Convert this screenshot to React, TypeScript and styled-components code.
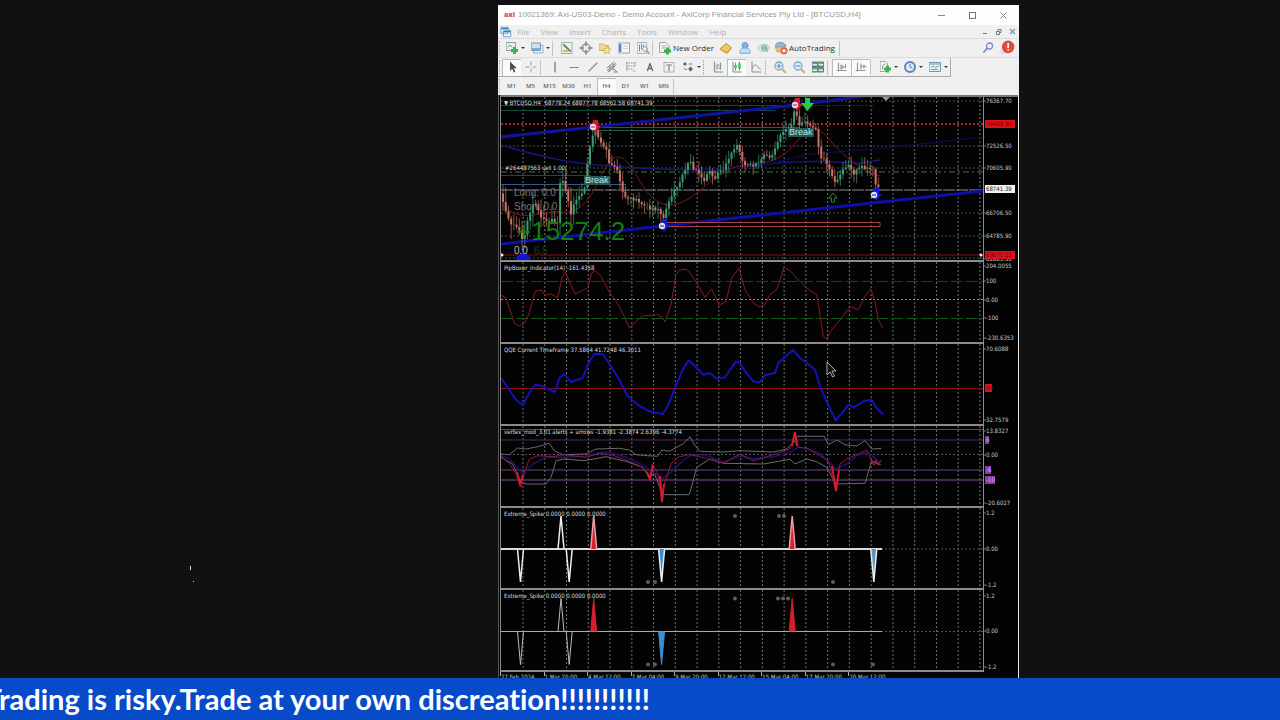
import React from "react";
import styled, { createGlobalStyle } from "styled-components";

const GlobalStyle = createGlobalStyle`
  * { box-sizing: border-box; }
  body { margin: 0; background: #111; font-family: "Open Sans", "Noto Sans", sans-serif; }
  button { font: inherit; color: inherit; background: none; border: 0; padding: 0; margin: 0; }
`;

/* ---------- page ---------- */

const Page = styled.div`
  display: flex;
  flex-direction: column;
  height: 100vh;
  overflow: hidden;
`;

const Stage = styled.main`
  position: relative;
  flex: 1;
  min-height: 0;
  overflow: hidden;
  display: grid;
  grid-template-columns: 498fr 521fr 261fr;
  padding-top: 5px;
`;

const Speck = styled.i<{ $x: string; $y: string; $h: number }>`
  position: absolute;
  left: ${(p) => p.$x};
  top: ${(p) => p.$y};
  width: 1px;
  height: ${(p) => p.$h}px;
  background: #ddd;
`;

const Terminal = styled.section`
  grid-column: 2;
  min-width: 0;
  overflow: hidden;
  background: #f0f0f0;
`;

const Ticker = styled.footer`
  flex: none;
  height: 42px;
  background: #084bc9;
  display: grid;
  grid-template-columns: 650fr 630fr;
  overflow: hidden;
`;

const TickerText = styled.p`
  margin: 0;
  min-width: 0;
  display: flex;
  justify-content: flex-end;
  align-items: center;
  white-space: nowrap;
  color: #fff;
  font: 700 29px/42px Lato, sans-serif;
  font-variant-ligatures: none;
`;

/* ---------- window chrome ---------- */

const TitleBar = styled.header`
  display: flex;
  align-items: center;
  height: 20px;
  padding-left: 6px;
  background: #fefefe;
`;

const Logo = styled.span`
  width: 14px;
  color: #e2455a;
  font: 800 7px/20px "Open Sans", sans-serif;
`;

const Title = styled.h1`
  flex: 1;
  margin: 0;
  color: #9a9a9a;
  font: 400 8px/20px "Liberation Sans", sans-serif;
  white-space: nowrap;
  overflow: hidden;
`;

const WindowButton = styled.button<{ $w: number }>`
  width: ${(p) => p.$w}px;
  height: 14px;
  display: flex;
  align-items: center;
  justify-content: center;
`;

const MenuBar = styled.nav`
  display: flex;
  align-items: center;
  height: 14px;
  padding: 0 0 0 2px;
  gap: 11px;
  color: #b0b0b0;
  font-size: 8px;
  line-height: 13px;
  border-bottom: 1px solid #dcdcdc;
`;

const MenuIcon = styled.span`
  display: flex;
  width: 12px;
  margin-right: -6px;
`;

const Spacer = styled.span`
  flex: 1;
`;

const MdiButtons = styled.span`
  display: flex;
`;

const Toolbar = styled.div<{ $framed?: boolean }>`
  display: flex;
  align-items: center;
  width: ${(p) => (p.$framed ? "fit-content" : "100%")};
  height: 19px;
  padding: 0 ${(p) => (p.$framed ? 0 : 3)}px 0 1px;
  color: #2c2c2c;
  border-bottom: 1px solid ${(p) => (p.$framed ? "#aaa" : "#dedede")};
  border-right: ${(p) => (p.$framed ? "1px solid #aaa" : "0")};
`;

const Grip = styled.span`
  flex: none;
  width: 3px;
  height: 14px;
  border-left: 1px dotted #aaa;
`;

const Divider = styled.span<{ $dotted?: boolean }>`
  flex: none;
  width: 5px;
  height: 15px;
  border-left: 1px ${(p) => (p.$dotted ? "dotted #999" : "solid #c4c4c4")};
`;

const Tool = styled.button<{ $on?: boolean }>`
  flex: none;
  min-width: 19px;
  height: 17px;
  display: flex;
  align-items: center;
  justify-content: center;
  background: ${(p) => (p.$on ? "#fafafa" : "transparent")};
  box-shadow: ${(p) => (p.$on ? "inset 1px 1px 0 #bbb" : "none")};
  svg { display: block; flex: none; opacity: 0.8; }
`;

const TextTool = styled(Tool)<{ $w: number }>`
  width: ${(p) => p.$w}px;
  justify-content: flex-start;
  gap: 1px;
  padding-left: 1px;
  font-size: 8px;
  line-height: 12px;
  white-space: nowrap;
`;

const Drop = styled.button`
  flex: none;
  width: 6px;
  height: 15px;
  display: flex;
  align-items: center;
  &::after {
    content: "";
    border: 2px solid transparent;
    border-top-color: #333;
    border-bottom: 0;
  }
`;

const Period = styled(Tool)`
  color: #666;
  font-size: 6px;
  font-weight: 600;
  line-height: 16px;
`;

/* ---------- charts ---------- */

const Charts = styled.div`
  background: #030303;
  border-left: 1px solid #555;
  border-right: 1px solid #e8e8e8;
  padding: 0 0 20px 1px;
  margin-top: -1px;
`;

const ChartTop = styled.div`
  height: 2px;
  background: #77797a;
`;

const Panel = styled.section<{ $h: number }>`
  display: grid;
  grid-template-columns: minmax(0, 1fr) 34px;
  height: ${(p) => p.$h}px;
`;

const Plot = styled.div`
  position: relative;
  overflow: hidden;
  border: solid #8d8a8a;
  border-width: 0 1px 2px 1px;
  svg { display: block; width: 100%; height: 100%; }
`;

const PanelTitle = styled.h2`
  position: absolute;
  left: 3px;
  top: 2px;
  margin: 0;
  color: #dcdcdc;
  font: 400 6px/8px "DejaVu Sans Condensed", "DejaVu Sans", sans-serif;
  white-space: nowrap;
`;

const Scale = styled.svg`
  display: block;
  width: 34px;
  height: 100%;
  overflow: hidden;
  text { font: 6px "DejaVu Sans Condensed", "DejaVu Sans", sans-serif; fill: #c8c8c8; }
`;

const Note = styled.span<{ $x: number; $y: number; $size: number; $color: string }>`
  position: absolute;
  left: ${(p) => p.$x}px;
  top: ${(p) => p.$y}px;
  color: ${(p) => p.$color};
  font: 400 ${(p) => p.$size}px/1 "Liberation Sans", sans-serif;
  white-space: nowrap;
`;

const OrderNote = styled(Note)`
  font-family: "DejaVu Sans Condensed", "DejaVu Sans", sans-serif;
`;

const BreakTag = styled(Note)`
  padding: 0 1px;
  background: #1d5c58;
`;

const Timeline = styled.ol`
  display: grid;
  grid-template-columns: repeat(11, 9%);
  margin: 0 34px 0 0;
  padding: 0;
  list-style: none;
  color: #ccc;
  font: 400 6px/10px "DejaVu Sans Condensed", "DejaVu Sans", sans-serif;
`;

const TimeMark = styled.li`
  border-left: 1px solid #aaa;
  height: 4px;
  white-space: nowrap;
`;

/* ---------- toolbar drawings ---------- */

const Ico = ({ children, s = 14 }: { children: React.ReactNode; s?: number }) => (
  <svg width={s} height={s} viewBox="0 0 14 14" fill="none" strokeLinecap="round" strokeLinejoin="round" aria-hidden="true">
    {children}
  </svg>
);
const Plus = ({ x = 9.5, y = 9.5 }) => (
  <path d={`M${x - 3.5} ${y}h7M${x} ${y - 3.5}v7`} stroke="#12a02a" strokeWidth="3" strokeLinecap="butt" />
);

const icons: Record<string, React.ReactNode> = {
  newChart: <><rect x="1.5" y="1.5" width="9" height="8" fill="#e4f1e8" stroke="#648d86" /><path d="M3 6l2-2 2 2" stroke="#4c8b62" /><Plus /></>,
  profiles: <><rect x="4" y="4.5" width="9" height="7.5" fill="#e6edf4" stroke="#8ba1b5" /><rect x="1.5" y="2" width="9" height="7.5" fill="#c3dff4" stroke="#5788b0" /><path d="M2 8h8" stroke="#5788b0" strokeWidth="1.5" /></>,
  market: <><rect x="2" y="1.5" width="10" height="11" fill="#f1f6da" stroke="#8aa0a8" /><path d="M4 4l6 6" stroke="#288053" strokeWidth="2" /><path d="M4 10h3" stroke="#e5a431" strokeWidth="2" /></>,
  target: <><circle cx="7" cy="7" r="4" stroke="#686868" strokeWidth="1.2" /><path d="M7 1v3.500M7 9.500v3.500M1 7h3.500M9.500 7h3.500" stroke="#686868" strokeWidth="1.6" /></>,
  navigator: <><path d="M1.500 3h4l1 1.500h4v5h-9z" fill="#f3d66c" stroke="#c3a144" /><path d="M9 5l1.200 2.600 2.800.3-2 2 .5 2.800L9 11.300l-2.500 1.400.5-2.800-2-2 2.800-.3z" fill="#ffe068" stroke="#c69a2a" strokeWidth=".7" /></>,
  terminal: <><rect x="1.500" y="2" width="11" height="10" fill="#f6fafe" stroke="#6f94bb" /><path d="M3.200 3v8" stroke="#2f68ad" strokeWidth="2.400" strokeLinecap="butt" /><path d="M6.500 5h4M6.500 7.500h4" stroke="#b9cadb" /></>,
  tester: <><rect x="1.500" y="1.500" width="9" height="11" fill="#edf3f7" stroke="#91a5b6" /><path d="M3.500 4v6M5.500 3v5M7.500 4v4" stroke="#55758f" /><circle cx="9" cy="8" r="2.300" fill="#fff" stroke="#6e8aa5" /><path d="M11 10l2 2.500" stroke="#6e8aa5" strokeWidth="1.500" /></>,
  order: <><path d="M2 1.500h6l3 3v7H2z" fill="#f5f8f5" stroke="#81948a" /><path d="M4 5h4M4 7h3" stroke="#7aa08b" /><Plus y={10} /></>,
  gold: <><path d="M1.500 7.500L7 2.500l5.500 4L8 11.500z" fill="#efbe42" stroke="#a87518" /><path d="M1.500 7.500v1.800L8 13v-1.500zM8 13l4.500-5V6.500L8 11.500z" fill="#c98f25" /></>,
  cloud: <><circle cx="7" cy="4.500" r="3" fill="#62a8e6" stroke="#4a8bcc" /><path d="M2 12c-1-3 2-5 5-5s6 2 5 5z" fill="#bcdaf3" stroke="#5b9bd4" /></>,
  signal: <><ellipse cx="7" cy="7" rx="5.500" ry="3.500" stroke="#9bbcaa" /><ellipse cx="7" cy="7" rx="2.800" ry="2" fill="#8ec19d" stroke="#62957c" /><path d="M9 5l1 5" stroke="#5da877" strokeWidth="1.500" /></>,
  auto: <><ellipse cx="6.500" cy="4.500" rx="5" ry="3" fill="#74b4d6" stroke="#497d9c" /><path d="M1.500 6h10l-2 5h-6z" fill="#e2b658" stroke="#9a7b36" strokeWidth=".7" /><circle cx="10" cy="9.800" r="3.600" fill="#d6472d" /><path d="M8.600 8.400h2.800v2.800H8.600z" fill="#fff" /></>,
  pointer: <path d="M5 1.500v9.500l2.200-2.200 1.600 3.700 1.600-.7-1.600-3.600h3z" fill="#222" />,
  cross: <path d="M7 1.500v4M7 8.500v4M1.500 7h4M8.500 7h4" stroke="#888" strokeLinecap="butt" />,
  vline: <path d="M7 2v10" stroke="#555" strokeWidth="1.200" />,
  hline: <path d="M3 7.500h8" stroke="#666" strokeWidth="1.200" />,
  slope: <path d="M3 11l8-8" stroke="#777" strokeWidth="1.200" />,
  channel: <path d="M2 8l7-6M3 12l8-7M2.500 10.500l8-7M5 6v5M8 4v6M9 9l3 3M9 12h3" stroke="#666" />,
  fibo: <path d="M2 3h10M2 6h10M2 9h7M3 2v9M11 2v5M9 11h3" stroke="#777" strokeDasharray="1.500 1" strokeLinecap="butt" />,
  textA: <path d="M4.500 10.500l2.500-7 2.500 7M5.500 8.500h3" stroke="#444" strokeWidth="1.300" />,
  label: <><rect x="2" y="2.500" width="10" height="9.500" stroke="#999" strokeDasharray="1.500 1" /><path d="M4.500 5h5M7 5v5.500" stroke="#666" strokeWidth="1.200" /></>,
  shapes: <><path d="M2 4l2-2 2 2-2 2zM7 9l2.500-2.500L12 9l-2.500 2.500z" fill="#444" /><path d="M3 8l2 2 1-1M8 4h3" stroke="#666" /></>,
  bars: <path d="M3.500 2v10h8M6 5v4M6 5h2M9.500 3v6M9.500 8H8" stroke="#6c7d75" strokeWidth="1.200" />,
  candles: <><path d="M3 2v10h8" stroke="#55705e" /><path d="M5.500 3v7M9.500 2v8" stroke="#2b8a4b" /><path d="M5.500 5v3M9.500 3.500v5" stroke="#2fae57" strokeWidth="2.800" strokeLinecap="butt" /></>,
  line: <path d="M3 2v10h9M3.500 8c2-4 3-4 4.500-2s2 2 3.500 3" stroke="#777" />,
  zoomIn: <><circle cx="6" cy="6" r="4" fill="#d7edfa" stroke="#5b9cc4" strokeWidth="1.300" /><path d="M4 6h4M6 4v4" stroke="#336f9c" /><path d="M9.200 9.200l3 3" stroke="#c7a044" strokeWidth="2" /></>,
  zoomOut: <><circle cx="6" cy="6" r="4" fill="#d7edfa" stroke="#5b9cc4" strokeWidth="1.300" /><path d="M4 6h4" stroke="#336f9c" /><path d="M9.200 9.200l3 3" stroke="#c7a044" strokeWidth="2" /></>,
  tile: <><path d="M1.500 2h5v4.500h-5zM7.500 7.500h5V12h-5z" fill="#3f7fae" stroke="#315f85" /><path d="M7.500 2h5v4.500h-5zM1.500 7.500h5V12h-5z" fill="#4f9f53" stroke="#34703a" /><path d="M2.500 4.800h3M8.500 4.800h3M2.500 10.300h3M8.500 10.300h3" stroke="#e8f4ea" strokeWidth="1.400" /></>,
  scroll: <path d="M3.500 3v8M2 10.500h9M6 5l3 2-3 2zM10.500 4v4" stroke="#76857d" strokeWidth="1.200" />,
  shift: <path d="M3.500 3v8M2 10.500h9M7 4v5M8 6.500h4M10 5v3" stroke="#76857d" strokeWidth="1.200" />,
  indicator: <><path d="M2.500 1.500h5l2 2v8h-7z" fill="#f8faf8" stroke="#86968c" /><path d="M4.500 9c0-4 1-5 2.500-5" stroke="#567" /><Plus y={9} /></>,
  clock: <><circle cx="7" cy="7" r="5" fill="#d9eafc" stroke="#356aa8" strokeWidth="2" /><path d="M7 4.500V7l2 1" stroke="#456" /></>,
  template: <><rect x="1.500" y="2.500" width="11" height="9" fill="#e7f2f6" stroke="#57829a" /><path d="M2 4h10" stroke="#57829a" /><path d="M3.500 7l2-1 2 1.500 3-1.500M3.500 9.500h6" stroke="#569067" /></>,
  search: <><circle cx="8.500" cy="5" r="3" fill="#eef3ff" stroke="#5872ba" strokeWidth="1.300" /><path d="M6 7.500L3 11" stroke="#5872ba" strokeWidth="1.800" /></>,
};

const T = ({ i, label, on }: { i: string; label: string; on?: boolean }) => (
  <Tool aria-label={label} $on={on}><Ico>{icons[i]}</Ico></Tool>
);

/* ---------- chart data ---------- */

type Pt = [number, number];

const X0 = 501;
const X1 = 983;
const gridX = Array.from({ length: 22 }, (_, i) => 523 + i * 21.76);

const parse = (s: string): Pt[] => s.trim().split(/\s+/).map((p) => p.split(",").map(Number) as Pt);

/* Samples are stored at three units per chart unit, relative to an origin. */
const scaled = (ox: number, oy: number, s: string): Pt[] => parse(s).map(([x, y]) => [ox + x / 3, oy + y / 3]);
const join = (pts: Pt[]) => pts.map(([x, y]) => `${x.toFixed(1)},${y.toFixed(1)}`).join(" ");
const series = (oy: number, left: string, right: string) => join([...scaled(496, oy, left), ...scaled(690, oy, right)]);

const closes = parse(`502,200 505,208 510,222 516,226 520,232 523,244 526,230 529,215 533,205 537,206 542,218
548,222 553,217 557,230 560,184 564,182 568,200 571,214 575,202 580,195 585,188 588,158 591,140 595,131 600,144
606,147 609,165 613,163 618,172 621,185 624,197 630,198 636,200 644,206 650,208 658,209 663,218 667,205 672,195
678,184 684,172 690,161 694,170 700,174 705,181 709,168 714,180 718,170 723,172 728,158 733,153 737,143 741,158
746,167 752,165 758,165 764,156 770,157 775,150 780,135 784,130 790,128 795,108 799,125 805,122 811,126 816,130
820,156 826,163 832,177 836,184 841,173 848,165 854,174 860,166 868,168 873,168 875,186 881,189`);

const priceAt = (x: number) => {
  for (let i = 1; i < closes.length; i++) {
    if (x <= closes[i][0]) {
      const [ax, ay] = closes[i - 1];
      const [bx, by] = closes[i];
      return ay + ((by - ay) * (x - ax)) / (bx - ax);
    }
  }
  return 189;
};
const wobble = (n: number) => {
  const v = Math.sin(n * 127.1) * 43758.5453;
  return v - Math.floor(v);
};
const candles = Array.from({ length: 139 }, (_, i) => {
  const x = 503 + i * 2.72;
  const open = priceAt(x - 2.72) + (wobble(i) - 0.5) * 4;
  const close = priceAt(x) + (wobble(i + 1) - 0.5) * 4;
  const swing = x < 590 ? 14 : 8;
  return {
    x, open, close,
    high: Math.min(open, close) - 1 - wobble(i + 300) * swing,
    low: Math.max(open, close) + 1 + wobble(i + 600) * swing,
  };
});

const pip = series(258,
  "15,112 28,118 40,150 55,195 68,204 85,197 100,165 118,100 135,96 147,112 165,108 185,120 197,60 208,42 222,75 238,108 260,97 275,90 287,45 297,38 315,55 342,105 360,128 385,175 400,210 420,190 440,174 485,170 500,180 507,192 525,140 540,50 550,36 570,34",
  "0,45 20,75 45,118 65,93 88,142 108,130 125,60 147,30 165,95 190,135 208,147 225,140 240,110 260,95 282,28 300,38 320,60 350,90 380,110 390,170 400,235 410,243 425,215 455,180 480,145 505,155 525,115 542,92 555,130 565,185 578,210");
const qqe = series(258,
  "15,360 40,395 60,425 80,442 100,405 118,380 135,383 150,390 177,402 190,360 205,348 225,372 260,360 275,320 295,287 320,288 345,325 370,365 395,415 425,440 460,460 500,468 515,445 535,395 560,335 577,308",
  "0,310 20,330 40,350 60,345 80,362 105,358 138,310 150,315 165,340 190,370 208,374 225,352 255,345 265,315 282,300 310,275 330,300 350,315 375,335 390,385 410,430 437,488 460,460 475,440 492,448 520,430 545,425 560,450 580,470");
const upper = series(424,
  "15,90 40,92 65,72 90,75 125,68 160,58 175,80 200,92 270,90 300,75 370,73 400,78 420,92 455,95 485,97 497,78 520,82 560,60 579,42",
  "0,38 12,60 30,82 100,84 150,80 250,84 290,75 315,50 320,37 403,37 415,62 440,48 465,62 500,66 525,50 545,75 575,73");
const lower = series(424,
  "15,100 50,120 75,175 90,180 150,180 165,160 180,110 205,105 265,110 330,98 390,112 440,130 460,160 475,148 495,200 505,212 578,212",
  "0,205 20,130 60,105 100,118 220,120 300,106 315,120 350,105 380,113 410,130 437,180 525,178 545,110 560,118 572,122");
const vertex = series(424,
  "15,98 40,118 60,150 75,190 85,150 100,105 125,95 170,98 205,92 270,100 310,88 345,92 390,108 430,125 450,140 460,165 470,120 485,150 498,235 505,180 525,120 545,100 578,92",
  "0,92 45,102 100,118 150,90 190,110 250,92 300,75 316,25 325,70 350,72 390,95 415,110 437,200 450,120 470,105 530,78 550,122 575,110");
const vertexSlow = series(424,
  "15,95 40,104 80,150 110,120 150,100 205,100 270,96 320,84 345,86 390,100 430,118 460,135 498,165 525,145 560,110 578,98",
  "0,95 45,92 100,115 150,96 190,104 250,98 300,85 325,68 350,74 390,88 437,135 470,120 500,95 530,85 550,98 565,112");
const vertexPeaks = [
  "517,472 520,484 523,475", "647,472 650,479 653,465", "660,476 662,502 664,484",
  "792,446 795,432 797,446", "832,466 836,491 839,470",
];

const Grid = ({ y0, h }: { y0: number; h: number }) => (
  <g stroke="#707070" strokeDasharray="2 2">
    {gridX.map((x) => <line key={x} x1={x} x2={x} y1={y0} y2={y0 + h} />)}
  </g>
);
const Dash = ({ y, c = "#6a6a6a", d = "2 2", w = 1 }: { y: number; c?: string; d?: string; w?: number }) => (
  <line x1={X0} x2={X1} y1={y} y2={y} stroke={c} strokeDasharray={d} strokeWidth={w} />
);

type Mark = { y: number; t: string; bg?: string; ink?: string; w?: number };

const PriceScale = ({ y0, h, marks }: { y0: number; h: number; marks: Mark[] }) => (
  <Scale viewBox={`984 ${y0} 34 ${h}`}>
    {marks.map((m) => (
      <g key={m.y}>
        {m.bg ? <rect x="985" y={m.y - 4} width={m.w ?? 30} height="8" fill={m.bg} /> : <path d={`M984 ${m.y}h2`} stroke="#777" />}
        <text x="986" y={m.y + 2} style={m.ink ? { fill: m.ink } : undefined}>{m.t}</text>
      </g>
    ))}
  </Scale>
);

const Indicator = ({ y0, h, title, marks, children }: {
  y0: number; h: number; title: string; marks: Mark[]; children: React.ReactNode;
}) => (
  <Panel $h={h + 2}>
    <Plot>
      <svg viewBox={`${X0} ${y0} ${X1 - X0} ${h}`} preserveAspectRatio="none" fill="none">
        <Grid y0={y0} h={h} />
        {children}
      </svg>
      <PanelTitle>{title}</PanelTitle>
    </Plot>
    <PriceScale y0={y0} h={h + 2} marks={marks} />
  </Panel>
);

const Anchor = ({ x, y, c }: { x: number; y: number; c: string }) => (
  <>
    <path d={`M${x - 2} ${y - 7}h5v6h3l-6 7-4-5z`} fill={c} />
    <circle cx={x - 2} cy={y} r="3.200" fill="#dcdcf0" />
    <path d={`M${x - 4} ${y}h4`} stroke={c} />
  </>
);

const spikes = [
  { x: 520.5, up: false, c: "none" }, { x: 561, up: true, c: "none" }, { x: 569.2, up: false, c: "none" },
  { x: 593.7, up: true, c: "#d4202c" }, { x: 661.6, up: false, c: "#3d8ed0" }, { x: 792.2, up: true, c: "#d4202c" },
  { x: 873.8, up: false, c: "#5d93b8" },
];

const Spikes = ({ base, bold, top, bottom }: { base: number; bold?: boolean; top: number[]; bottom: number[] }) => (
  <>
    <Dash y={base} c="#555" />
    <line x1={X0} x2="882" y1={base} y2={base} stroke={bold ? "#d8d8d8" : "#aaa"} strokeWidth={bold ? 2 : 1} />
    {spikes.slice(0, bold ? 7 : 6).map(({ x, up, c }) => (
      <path key={x} d={`M${x - 3} ${base}L${x} ${base + (up ? -33 : 33)}L${x + 3} ${base}`} fill={c}
        stroke={bold ? (c === "#d4202c" ? "#eca0a4" : "#e8f0f4") : c === "none" ? "#bbb" : c} strokeWidth={bold ? 1.5 : 1} />
    ))}
    {top.map((x) => <circle key={x} cx={x} cy={base - 33} r="2" fill="#5d5d5d" />)}
    {bottom.map((x) => <circle key={x} cx={x} cy={base + 33} r="2" fill="#5d5d5d" />)}
  </>
);

const priceMarks: Mark[] = [
  { y: 101, t: "76367.70" }, { y: 124, t: "74405.90", bg: "#e01018", ink: "#5c0408" }, { y: 146, t: "72526.50" },
  { y: 168, t: "70605.90" }, { y: 189, t: "68741.39", bg: "#f2f2f2", ink: "#222" }, { y: 213, t: "66706.50" },
  { y: 236, t: "64785.90" }, { y: 259, t: "62865.30" }, { y: 255, t: "63071.11", bg: "#e01018", ink: "#5c0408" },
];

const PriceChart = () => (
  <Panel $h={165}>
    <Plot>
      <svg viewBox="501 97 482 163" preserveAspectRatio="none" fill="none">
        <Grid y0={97} h={163} />
        {[101, 146, 168, 213, 236, 258].map((y) => <Dash key={y} y={y} c="#4c4c4c" />)}
        <path d="M501 105.500h295M501 110.500h275" stroke="#124a3a" />
        <path d="M796 105.500h78" stroke="#5a1420" strokeDasharray="2 1" />
        <path d="M594 127.500h206M594 130.500h206" stroke="#1f5c52" />
        <path d="M501 175.500h90" stroke="#1b4b48" />
        <path d="M501 184.500h125" stroke="#3c5584" />
        <Dash y={124} c="#b5202c" w={2} />
        <Dash y={172} c="#3f7a45" d="6 3 2 3" />
        <Dash y={190} c="#8a8d8d" d="12 1" />
        <Dash y={255} c="#841018" d="none" />
        <path d="M501 145Q530 154 560 160T660 169Q720 171 760 165T860 163L880 160" stroke="#14147c" strokeWidth="1.500" />
        <path d="M690 171L760 166 810 154 885 148 983 137" stroke="#0b0b48" strokeWidth="1.500" />
        <path d="M502 205C525 225 540 210 560 212S590 200 600 178 618 152 628 163 645 198 663 204 700 190 715 178 740 165 760 163 790 150 800 138 818 125 830 140 860 170 880 176" stroke="#7a141c" />
        <path d="M501 137L594 127 796 105 865 96" stroke="#1212a0" strokeWidth="3" />
        <path d="M501 244L662 226 983 191" stroke="#0e0ea8" strokeWidth="3" />
        <path d="M662 222.500h218v4h-218z" stroke="#a2444a" />
        {candles.map((c) => {
          const color = c.close < c.open ? "#3c9a72" : "#c87464";
          return (
            <g key={c.x} stroke={color}>
              <line x1={c.x} x2={c.x} y1={c.high} y2={c.low} strokeOpacity=".7" />
              <line x1={c.x} x2={c.x} y1={c.open} y2={c.close} strokeWidth="2" />
            </g>
          );
        })}
        <path d="M516 257l7-5 7 5v3h-14z" fill="#1414d8" />
        <Anchor x={595} y={127} c="#d01828" />
        <Anchor x={797} y={105} c="#d01828" />
        <Anchor x={664} y={226} c="#1818d0" />
        <Anchor x={876} y={195} c="#1818d0" />
        <path d="M805 98h5v5h4l-6.500 8-6.500-8h4z" fill="#1fd044" />
        <path d="M831.500 202v-4h-2.500l4-5 4 5h-2.500v4z" stroke="#258a30" />
        <path d="M882 97h8l-4 4z" fill="#999" />
        <circle cx="502" cy="255" r="1.500" fill="#eee" />
        <circle cx="981" cy="255" r="1.500" fill="#eee" />
      </svg>
      <Note $x={13} $y={91} $size={10} $color="#6f7675">Long: 0.0</Note>
      <Note $x={13} $y={105} $size={10} $color="#6f7675">Short: 0.0</Note>
      <Note $x={15} $y={121} $size={26} $color="#137d13">+15274.2</Note>
      <Note $x={13} $y={149} $size={10} $color="#b8b8b8">0.0</Note>
      <Note $x={33} $y={149} $size={10} $color="#0d440d">6.5</Note>
      <BreakTag $x={83} $y={79} $size={9} $color="#c8e4e2">Break</BreakTag>
      <BreakTag $x={287} $y={31} $size={9} $color="#c8e4e2">Break</BreakTag>
      <PanelTitle>▼ BTCUSD,H4&nbsp; 68778.24 68877.78 68562.58 68741.39</PanelTitle>
      <OrderNote $x={4} $y={68} $size={6} $color="#dcdcdc">#264487563 sell 1.00</OrderNote>
    </Plot>
    <PriceScale y0={97} h={165} marks={priceMarks} />
  </Panel>
);

const periods = ["M1", "M5", "M15", "M30", "H1", "H4", "D1", "W1", "MN"];
const menus = ["File", "View", "Insert", "Charts", "Tools", "Window", "Help"];
const dates = ["27 Feb 2024", "1 Mar 20:00", "4 Mar 12:00", "7 Mar 04:00", "9 Mar 20:00", "12 Mar 12:00", "15 Mar 04:00", "17 Mar 20:00", "20 Mar 12:00"];

export default function App() {
  return (
    <Page>
      <GlobalStyle />
      <Stage>
        <Speck $x="190px" $y="566px" $h={4} />
        <Speck $x="193px" $y="581px" $h={1} />
        <Terminal>
          <TitleBar>
            <Logo>axi</Logo>
            <Title>10021369: Axi-US03-Demo - Demo Account - AxiCorp Financial Services Pty Ltd - [BTCUSD,H4]</Title>
            <WindowButton $w={31} aria-label="Minimize"><svg width="9" height="9"><path d="M1 4.500h7" stroke="#888" /></svg></WindowButton>
            <WindowButton $w={31} aria-label="Maximize"><svg width="9" height="9"><rect x="1.500" y="1.500" width="6" height="6" fill="none" stroke="#777" /></svg></WindowButton>
            <WindowButton $w={31} aria-label="Close"><svg width="9" height="9"><path d="M1.500 1.500l6 6M7.500 1.500l-6 6" stroke="#888" /></svg></WindowButton>
          </TitleBar>
          <MenuBar>
            <MenuIcon>
              <Ico s={12}><path d="M1.500 1.500h8v7h-8zM4.500 5h8v7.500h-8z" fill="#e8f2fb" stroke="#5d94c4" /><path d="M5 6.500h7M2 3h7" stroke="#3f7cb5" strokeWidth="1.400" /></Ico>
            </MenuIcon>
            {menus.map((m) => <button key={m}>{m}</button>)}
            <Spacer />
            <MdiButtons>
              <WindowButton $w={14} aria-label="Minimize chart"><svg width="7" height="7"><path d="M1 5.500h4" stroke="#777" /></svg></WindowButton>
              <WindowButton $w={13} aria-label="Restore chart"><svg width="7" height="7"><path d="M1.500 3.500h3v3h-3zM3 3V1.500h3V4.500H5" fill="none" stroke="#777" /></svg></WindowButton>
              <WindowButton $w={14} aria-label="Close chart"><svg width="7" height="7"><path d="M1 1l5 5M6 1L1 6" stroke="#8490b0" strokeWidth="1.300" /></svg></WindowButton>
            </MdiButtons>
          </MenuBar>
          <Toolbar>
            <Grip />
            <T i="newChart" label="New chart" /><Drop aria-label="New chart options" />
            <T i="profiles" label="Profiles" /><Drop aria-label="Profile options" />
            <Divider />
            <T i="market" label="Market watch" />
            <T i="target" label="Data window" />
            <T i="navigator" label="Navigator" />
            <T i="terminal" label="Terminal" />
            <T i="tester" label="Strategy tester" />
            <Divider />
            <TextTool $w={59}><Ico>{icons.order}</Ico>New Order</TextTool>
            <T i="gold" label="MetaEditor" />
            <T i="cloud" label="Community" />
            <T i="signal" label="Signals" />
            <TextTool $w={66}><Ico>{icons.auto}</Ico>AutoTrading</TextTool>
            <Divider />
            <Spacer />
            <T i="search" label="Search" />
            <Tool aria-label="Notifications">
              <Ico s={16}>
                <path d="M1 8h6v4H4l-2 2z" fill="#d4dce8" />
                <circle cx="8" cy="6" r="5.500" fill="#dc2510" /><path d="M8 3v3.500M8 8.500v.3" stroke="#fff" strokeWidth="1.400" />
              </Ico>
            </Tool>
          </Toolbar>
          <Toolbar $framed>
            <Grip />
            <T i="pointer" label="Cursor" on /><T i="cross" label="Crosshair" />
            <Divider />
            <T i="vline" label="Vertical line" /><T i="hline" label="Horizontal line" /><T i="slope" label="Trendline" />
            <T i="channel" label="Channel" /><T i="fibo" label="Fibonacci" /><T i="textA" label="Text" />
            <T i="label" label="Text label" /><T i="shapes" label="Arrows" /><Drop aria-label="Arrow options" />
            <Divider $dotted />
            <T i="bars" label="Bar chart" /><T i="candles" label="Candlesticks" on /><T i="line" label="Line chart" />
            <Divider />
            <T i="zoomIn" label="Zoom in" /><T i="zoomOut" label="Zoom out" /><T i="tile" label="Tile windows" />
            <Divider />
            <T i="scroll" label="Auto scroll" on /><T i="shift" label="Chart shift" on />
            <Divider />
            <T i="indicator" label="Indicators" /><Drop aria-label="Indicator options" />
            <T i="clock" label="Periods" /><Drop aria-label="Period options" />
            <T i="template" label="Templates" /><Drop aria-label="Template options" />
          </Toolbar>
          <Toolbar>
            <Grip />
            {periods.map((p) => <Period key={p} $on={p === "H4"}>{p}</Period>)}
            <Divider />
          </Toolbar>
          <Charts>
            <ChartTop />
            <PriceChart />
            <Indicator y0={262} h={80} title="PipBoxer_Indicator(14) -161.4358" marks={[
              { y: 266, t: "204.0055" }, { y: 281, t: "100" }, { y: 300, t: "0.00" }, { y: 318, t: "-100" }, { y: 338, t: "-230.6353" },
            ]}>
              <Dash y={281.5} c="#0e4a14" d="12 3" /><Dash y={299.5} c="#8a8a8a" /><Dash y={318.5} c="#0e5a14" d="12 3" />
              <polyline points={pip} stroke="#8a1a20" />
            </Indicator>
            <Indicator y0={344} h={80} title="QQE Current Timeframe 37.5864 41.7248 46.3011" marks={[
              { y: 349, t: "70.6088" }, { y: 388, t: "50", bg: "#d0141c", ink: "#7a0a0e", w: 7 }, { y: 420, t: "32.7579" },
            ]}>
              <Dash y={388.5} c="#8a1014" d="none" />
              <polyline points={qqe} stroke="#1212b8" strokeWidth="2" strokeLinejoin="round" />
              <path d="M827 362v13l3-3 2.500 5 2-1-2.500-5h4z" fill="#111" stroke="#aaa" />
            </Indicator>
            <Indicator y0={426} h={80} title="vertex_mod_3.01 alerts + arrows -1.9381 -2.3874 2.6396 -4.3774" marks={[
              { y: 431, t: "13.8327" }, { y: 440, t: "6", bg: "#7a3c98", ink: "#d8b8e4", w: 4 }, { y: 455, t: "0.00" },
              { y: 470, t: "-6", bg: "#8a3cae", ink: "#d8b8e4", w: 6 }, { y: 480, t: "-10", bg: "#8a3cae", ink: "#d8b8e4", w: 10 }, { y: 503, t: "-20.6027" },
            ]}>
              <Dash y={429.5} c="#66406e" d="none" /><Dash y={440} c="#4c2c66" d="none" /><Dash y={454.5} c="#555" />
              <Dash y={470} c="#6a4080" d="none" /><Dash y={480} c="#8052a0" d="none" />
              <polyline points={upper} stroke="#6a6a6a" /><polyline points={lower} stroke="#6a6a6a" />
              <polyline points={vertexSlow} stroke="#221070" strokeWidth="1.500" />
              <polyline points={vertex} stroke="#84184a" />
              {vertexPeaks.map((p) => <polyline key={p} points={p} stroke="#d41c2c" strokeWidth="2" />)}
              <polyline points="871,460 874,465 876,460 878,465 881,461" stroke="#b01c2c" />
            </Indicator>
            <Indicator y0={508} h={80} title="Extreme_Spike 0.0000 0.0000 0.0000" marks={[
              { y: 513, t: "1.2" }, { y: 549, t: "0.00" }, { y: 585, t: "-1.2" },
            ]}>
              <Spikes base={549} bold top={[735, 779, 784]} bottom={[648, 655, 833]} />
            </Indicator>
            <Indicator y0={590} h={80} title="Extreme_Spike 0.0000 0.0000 0.0000" marks={[
              { y: 596, t: "1.2" }, { y: 631, t: "0.00" }, { y: 667, t: "-1.2" },
            ]}>
              <Spikes base={631.5} top={[735, 778, 783, 788]} bottom={[648, 655, 833, 873]} />
            </Indicator>
            <Timeline>{dates.map((d) => <TimeMark key={d}>{d}</TimeMark>)}</Timeline>
          </Charts>
        </Terminal>
      </Stage>
      <Ticker><TickerText>Trading is risky.Trade at your own discreation!!!!!!!!!!!</TickerText></Ticker>
    </Page>
  );
}
